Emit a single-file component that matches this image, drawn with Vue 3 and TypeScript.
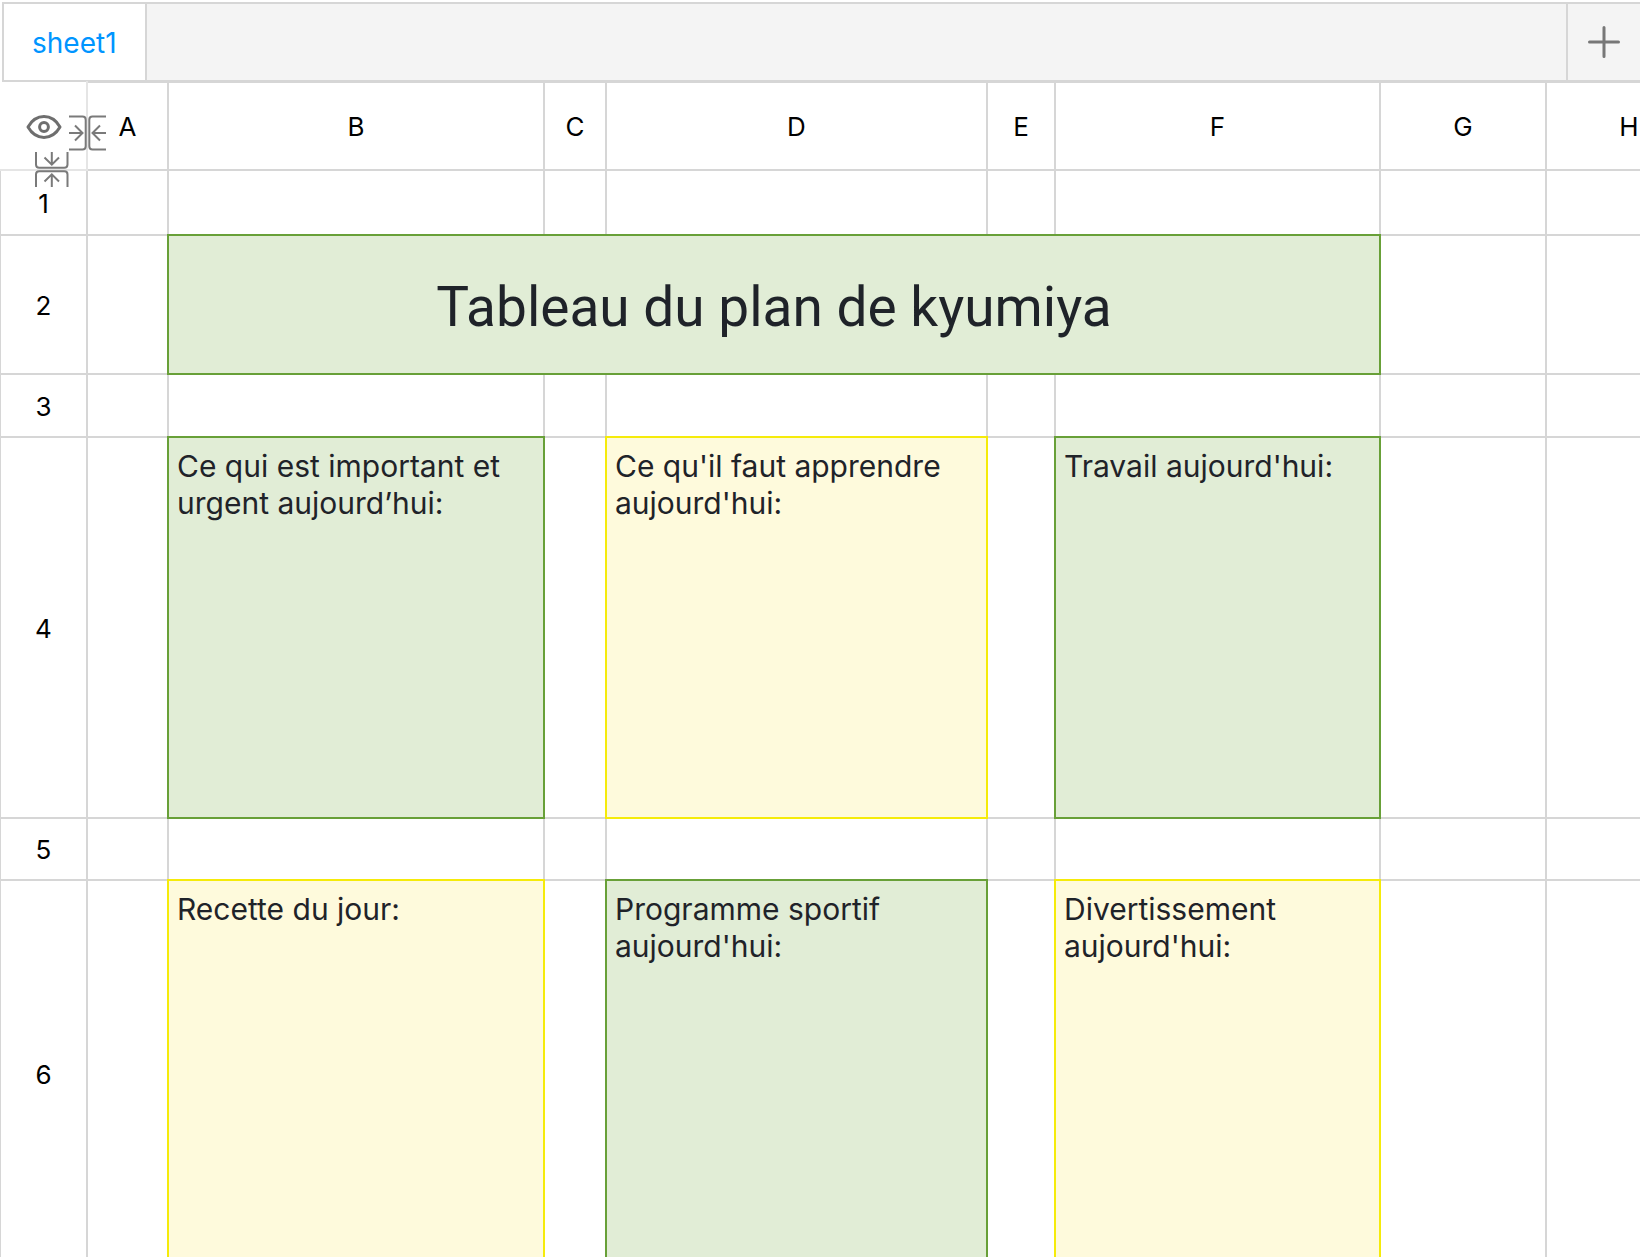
<script setup lang="ts">
import { ref } from 'vue'

interface Cell {
  text?: string
  tone?: 'green' | 'yellow'
  title?: boolean
  span?: number
}

interface Row {
  height: number
  cells: Cell[]
}

const sheets = ref<string[]>(['sheet1'])
const active = ref<string>('sheet1')

const columns: { name: string; width: number }[] = [
  { name: 'A', width: 81 },
  { name: 'B', width: 376 },
  { name: 'C', width: 62 },
  { name: 'D', width: 381 },
  { name: 'E', width: 68 },
  { name: 'F', width: 325 },
  { name: 'G', width: 166 },
  { name: 'H', width: 166 },
]

const blank = (count: number): Cell[] => Array.from({ length: count }, () => ({}))

const rows: Row[] = [
  { height: 65, cells: blank(8) },
  {
    height: 139,
    cells: [{}, { text: 'Tableau du plan de kyumiya', tone: 'green', title: true, span: 5 }, {}, {}],
  },
  { height: 63, cells: blank(8) },
  {
    height: 381,
    cells: [
      {},
      { text: 'Ce qui est important et urgent aujourd’hui:', tone: 'green' },
      {},
      { text: "Ce qu'il faut apprendre aujourd'hui:", tone: 'yellow' },
      {},
      { text: "Travail aujourd'hui:", tone: 'green' },
      {},
      {},
    ],
  },
  { height: 62, cells: blank(8) },
  {
    height: 388,
    cells: [
      {},
      { text: 'Recette du jour:', tone: 'yellow' },
      {},
      { text: "Programme sportif aujourd'hui:", tone: 'green' },
      {},
      { text: "Divertissement aujourd'hui:", tone: 'yellow' },
      {},
      {},
    ],
  },
]

function addSheet(): void {
  sheets.value.push(`sheet${sheets.value.length + 1}`)
}
</script>

<template>
  <div class="workbook">
    <nav class="tabs">
      <button
        v-for="name in sheets"
        :key="name"
        type="button"
        class="tab"
        :class="{ active: name === active }"
        @click="active = name"
      >
        {{ name }}
      </button>
      <button type="button" class="add" aria-label="+" @click="addSheet">
        <svg width="32" height="32" viewBox="0 0 32 32" fill="none" stroke="#777" stroke-width="3" stroke-linecap="round">
          <path d="M16 1.5v29M1.5 16h29" />
        </svg>
      </button>
    </nav>

    <main class="sheet">
      <table>
        <colgroup>
          <col class="index-col" />
          <col v-for="col in columns" :key="col.name" :style="{ width: col.width + 'px' }" />
        </colgroup>
        <thead>
          <tr>
            <td class="corner">
              <div class="tools">
                <button type="button" class="tool eye">
                  <svg width="36" height="26" viewBox="0 0 36 26" fill="none" stroke="#6e6e6e" stroke-width="3">
                    <path d="M2 13C6 6 11.500 2.600 18 2.600S30 6 34 13C30 20 24.500 23.400 18 23.400S6 20 2 13Z" stroke-linejoin="round" />
                    <circle cx="18" cy="13" r="4.400" />
                  </svg>
                </button>
                <button type="button" class="tool fold-cols">
                  <svg width="38" height="36" viewBox="0 0 38 36" fill="none" stroke="#7a7a7a" stroke-width="2">
                    <path d="M0 1.500H13.500Q16.700 1.500 16.700 4.700V31.300Q16.700 34.500 13.500 34.500H0" />
                    <path d="M37 1.500H23.500Q20.300 1.500 20.300 4.700V31.300Q20.300 34.500 23.500 34.500H37" />
                    <path d="M0 18H13.500M6 10.500 13.500 18 6 25.500M37 18H23.500M31 10.500 23.500 18 31 25.500" />
                  </svg>
                </button>
                <button type="button" class="tool fold-rows">
                  <svg width="34" height="36" viewBox="0 0 34 36" fill="none" stroke="#7a7a7a" stroke-width="2">
                    <path d="M1 0V12.500Q1 15.700 4.200 15.700H29.300Q32.500 15.700 32.500 12.500V0" />
                    <path d="M1 35V22.500Q1 19.300 4.200 19.300H29.300Q32.500 19.300 32.500 22.500V35" />
                    <path d="M16.800 0V12.500M9.500 5.500 16.800 12.700 24 5.500M16.800 35V22.500M9.500 29.500 16.800 22.300 24 29.500" />
                  </svg>
                </button>
              </div>
            </td>
            <th v-for="col in columns" :key="col.name" scope="col">{{ col.name }}</th>
          </tr>
        </thead>
        <tbody>
          <tr v-for="(row, r) in rows" :key="r" :style="{ height: row.height + 'px' }">
            <th scope="row">{{ r + 1 }}</th>
            <td
              v-for="(cell, c) in row.cells"
              :key="c"
              :colspan="cell.span"
              :class="[cell.tone, { title: cell.title }]"
            >{{ cell.text }}</td>
          </tr>
        </tbody>
      </table>
    </main>
  </div>
</template>

<style>
body {
  margin: 0;
  background: #fff;
}
</style>

<style scoped>
.workbook {
  display: flex;
  flex-direction: column;
  height: 100vh;
  overflow: hidden;
  box-sizing: border-box;
  padding-top: 2px;
  font-family: Inter, 'Liberation Sans', sans-serif;
  color: #1f2329;
}

button {
  margin: 0;
  padding: 0;
  border: 0;
  background: none;
  font: inherit;
  cursor: pointer;
}

svg {
  display: block;
}

.tabs {
  display: flex;
  flex: none;
  height: 76px;
  margin-left: 2px;
  border: 2px solid #d6d6d6;
  border-right: 0;
  background: #f4f4f4;
}

.tab {
  padding: 2px 28px 0;
  border-right: 2px solid #d6d6d6;
  font-size: 28px;
  color: #333;
}

.tab.active {
  background: #fff;
  color: #0095ff;
}

.add {
  display: flex;
  align-items: center;
  justify-content: center;
  width: 74px;
  margin-left: auto;
  border-left: 2px solid #d6d6d6;
}

.sheet {
  flex: 1;
  min-height: 0;
  margin-top: -1px;
}

table {
  width: 0;
  table-layout: fixed;
  border-collapse: collapse;
  margin-left: -1px;
}

col {
  border-left: 2px solid #d6d6d6;
  border-right: 2px solid #d6d6d6;
}

.index-col {
  width: 87px;
}

tr {
  border-top: 2px solid #d6d6d6;
  border-bottom: 2px solid #d6d6d6;
}

thead tr {
  height: 88px;
}

th {
  padding: 2px 0 0;
  font-size: 26px;
  font-weight: 400;
  line-height: 32px;
  color: #000;
}

td {
  padding: 10px 8px;
  font-size: 30px;
  line-height: 37px;
  vertical-align: top;
}

.green {
  border: 2px solid #68a038;
  background: #e1edd6;
}

.yellow {
  border: 2px solid #f5eb0a;
  background: #fefadc;
}

.title {
  padding: 4px 0 0;
  font-family: Roboto, 'Liberation Sans', sans-serif;
  font-size: 55px;
  line-height: 68px;
  text-align: center;
  vertical-align: middle;
}

.corner {
  padding: 0;
  border-top: 2px hidden;
  border-left: 2px hidden;
  border-right: 2px solid #e5e5e5;
  border-bottom: 2px solid #e5e5e5;
}

.tools {
  position: relative;
}

.tool {
  position: absolute;
}

.eye {
  top: 32px;
  left: 26px;
}

.fold-cols {
  top: 33px;
  left: 69px;
}

.fold-rows {
  top: 70px;
  left: 35px;
}
</style>
